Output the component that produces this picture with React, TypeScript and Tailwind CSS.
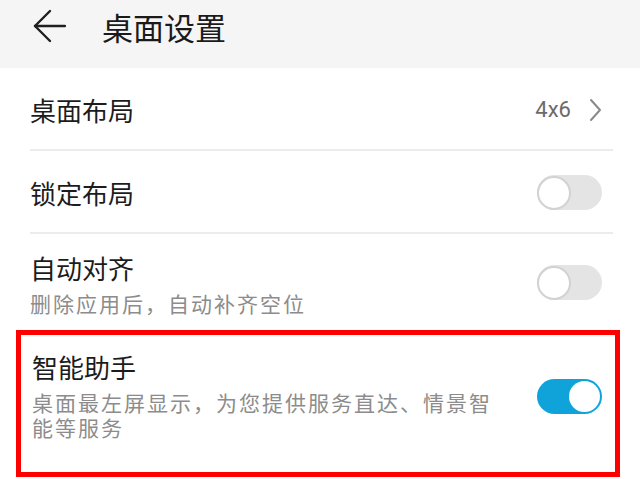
const font = { fontFamily: '"Noto Sans CJK SC", "Noto Sans", sans-serif' };

const Toggle = ({ on }: { on: boolean }) => {
  if (on) {
    return (
      <div className="flex h-[35px] w-[65px] shrink-0 items-center justify-end rounded-full bg-[#10a3da] p-[2px]">
        <div className="h-[31px] w-[31px] rounded-full bg-white" />
      </div>
    );
  }
  return (
    <div className="flex h-[35px] w-[65px] shrink-0 items-center rounded-full bg-[#e4e4e4]">
      <div className="h-[34px] w-[34px] rounded-full border-2 border-[#d2d2d2] bg-white" />
    </div>
  );
};

const Divider = () => <div className="h-[2px] bg-[#ececec]" />;

export default function App() {
  return (
    <div className="h-[479px] w-[640px] overflow-hidden bg-white" style={font}>
      {/* header */}
      <div className="flex h-[68px] items-start bg-[#f5f5f5] pl-[33px] pt-[9px]">
        <svg width="33" height="34" viewBox="0 0 33 34" fill="none" stroke="#1f1f1f" strokeWidth="2.4" strokeLinecap="round" strokeLinejoin="round">
          <path d="M2 17 H32" />
          <path d="M17 2 L2 17 L17 32" />
        </svg>
        <span className="ml-[36px] -mt-[2px] text-[31px] leading-[40px] text-[#1a1a1a]">桌面设置</span>
      </div>

      <div className="ml-[30px] mr-[27px]">
        <div className="flex h-[81px] items-center justify-between pr-[11px] pt-[3px]">
          <span className="text-[26px] leading-[30px] text-[#1c1c1c]">桌面布局</span>
          <div className="flex items-center">
            <span className="text-[22px] leading-[26px] text-[#6b6b6b]" style={{ fontFamily: 'Roboto, "Noto Sans", sans-serif' }}>
              4x6
            </span>
            <svg className="ml-[18px]" width="13" height="24" viewBox="0 0 13 24" fill="none" stroke="#8a8a8a" strokeWidth="2" strokeLinecap="round" strokeLinejoin="round">
              <path d="M2 2 L11 12 L2 22" />
            </svg>
          </div>
        </div>
        <Divider />

        <div className="flex h-[81px] items-center justify-between pr-[11px] pt-[2px]">
          <span className="text-[26px] leading-[30px] text-[#1c1c1c]">锁定布局</span>
          <Toggle on={false} />
        </div>
        <Divider />

        <div className="flex h-[96px] items-start justify-between pr-[11px] pt-[19px]">
          <div>
            <div className="text-[26px] leading-[30px] text-[#1c1c1c]">自动对齐</div>
            <div className="mt-2 text-[21px] leading-[25px] tracking-[2px] text-[#8c8c8c]">删除应用后，自动补齐空位</div>
          </div>
          <div className="mt-[12px]">
            <Toggle on={false} />
          </div>
        </div>
      </div>

      {/* highlighted row */}
      <div className="ml-[16px] mr-[20px] h-[147px] border-[5px] border-[#ff0000] pl-[11px] pr-[13px] pt-[17px]">
        <div className="flex items-center justify-between">
          <div>
            <div className="text-[26px] leading-[30px] text-[#1c1c1c]">智能助手</div>
            <div className="mt-2 text-[21px] leading-[25px] tracking-[2px] text-[#8c8c8c]">
              <div className="whitespace-nowrap">桌面最左屏显示，为您提供服务直达、情景智</div>
              <div>能等服务</div>
            </div>
          </div>
          <Toggle on={true} />
        </div>
      </div>
    </div>
  );
}
